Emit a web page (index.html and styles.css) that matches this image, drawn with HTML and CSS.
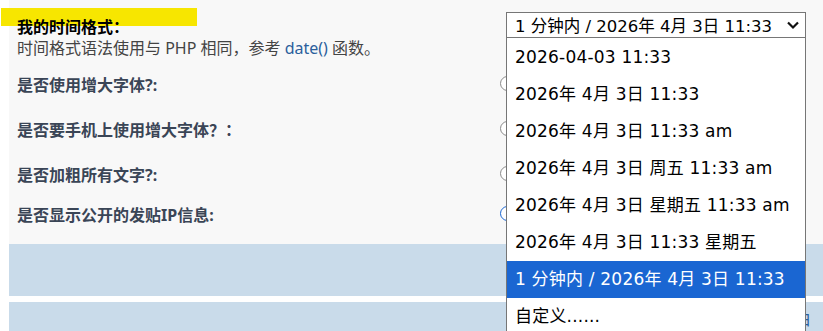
FILE: index.html
```html
<!DOCTYPE html>
<html lang="zh-CN">
<head>
    <meta charset="UTF-8">
    <title>我的时间格式</title>
    <link rel="stylesheet" href="styles.css">
</head>
<body>
    <div class="panel">
        <div class="row first">
            <div class="label">
                <span class="mark"></span>
                <strong class="title">我的时间格式：</strong>
                <p class="hint">时间格式语法使用与 PHP 相同，参考 <a href="#">date()</a> 函数。</p>
            </div>
            <div class="control">
                <div class="select">
                    <span>1 分钟内 / 2026年 4月 3日 11:33</span>
                    <svg class="chev" width="14" height="10" viewBox="0 0 14 10"><path d="M2 2.5 L7 7.5 L12 2.5" fill="none" stroke="#111" stroke-width="2.2"/></svg>
                </div>
            </div>
        </div>
        <div class="row"><div class="label">是否使用增大字体?:</div><div class="control"><span class="radio"></span></div></div>
        <div class="row"><div class="label">是否要手机上使用增大字体？：</div><div class="control"><span class="radio"></span></div></div>
        <div class="row"><div class="label">是否加粗所有文字?:</div><div class="control"><span class="radio"></span></div></div>
        <div class="row last"><div class="label">是否显示公开的发贴IP信息:</div><div class="control"><span class="radio on"></span></div></div>
    </div>
    <div class="band"></div>
    <div class="band second"><a class="edge" href="#">白石</a></div>

    <!-- open list of the select -->
    <ul class="options">
        <li>2026-04-03 11:33</li>
        <li>2026年 4月 3日 11:33</li>
        <li>2026年 4月 3日 11:33 am</li>
        <li>2026年 4月 3日 周五 11:33 am</li>
        <li>2026年 4月 3日 星期五 11:33 am</li>
        <li>2026年 4月 3日 11:33 星期五</li>
        <li class="picked">1 分钟内 / 2026年 4月 3日 11:33</li>
        <li>自定义......</li>
    </ul>
</body>
</html>
```

FILE: styles.css
```css
/* page */
html {
    overflow: hidden;
}
body {
    margin: 0;
    background: #fff;
    font-family: "Noto Sans", "Noto Sans CJK SC", sans-serif;
    font-size: 16px;
    overflow: hidden;
    height: 331px;
    position: relative;
}

.panel {
    margin-left: 9px;
    background: #f8f8f8;
    height: 244px;
    padding-left: 8px;
    box-sizing: border-box;
}

.row {
    display: flex;
    height: 45px;
    align-items: center;
}
.row.first {
    height: 62px;
    align-items: flex-start;
    padding-top: 12px;
    box-sizing: border-box;
}
.row.last {
    height: 36px;
}

.label {
    width: 489px;
    font-weight: bold;
    color: #3a4556;
    line-height: 22px;
}
.row.first .label {
    font-weight: normal;
    position: relative;
}

.mark {
    position: absolute;
    left: -16px;
    top: -4px;
    width: 196px;
    height: 18px;
    background: #f7e600;
}
.title {
    position: relative;
    top: 2px;
    color: #000;
    display: block;
    line-height: 26px;
}
.hint {
    margin: -1px 0 0;
    color: #444;
    line-height: 22px;
}
.hint a {
    color: #2b5f9c;
    text-decoration: none;
}

.control {
    flex: 1;
}

.select {
    width: 300px;
    height: 26px;
    box-sizing: border-box;
    border: 1px solid #767676;
    background: #fff;
    display: flex;
    align-items: center;
    justify-content: space-between;
    padding: 0 5px 0 8px;
    font-family: "DejaVu Sans", "Noto Sans CJK SC", sans-serif;
    font-size: 16.5px;
    color: #000;
    white-space: nowrap;
}

.radio {
    display: inline-block;
    width: 13px;
    height: 13px;
    border: 1px solid #8a8a8a;
    border-radius: 50%;
    margin-left: -6px;
    background: #fff;
}
.radio.on {
    border-color: #1a66d2;
}

.band {
    margin-left: 9px;
    height: 52px;
    background: #c9dbea;
    position: relative;
}
.band.second {
    margin-top: 6px;
    height: 29px;
}
.edge {
    position: absolute;
    left: 786px;
    top: 6px;
    color: #2b5f9c;
    text-decoration: none;
    font-size: 16px;
    line-height: 22px;
}

/* dropdown list, drawn over the page */
.options {
    position: absolute;
    left: 506px;
    top: 38px;
    width: 300px;
    height: 293px;
    overflow: hidden;
    margin: 0;
    padding: 1px 0 0;
    box-sizing: border-box;
    list-style: none;
    background: #fff;
    border-left: 1px solid #767676;
    border-right: 1px solid #767676;
    font-family: "DejaVu Sans", "Noto Sans CJK SC", sans-serif;
    font-size: 17px;
    letter-spacing: 0.2px;
    color: #000;
}
.options li {
    height: 37px;
    line-height: 37px;
    padding-left: 8px;
    white-space: nowrap;
}
.options li.picked {
    background: #1a66d2;
    color: #fff;
}
```
